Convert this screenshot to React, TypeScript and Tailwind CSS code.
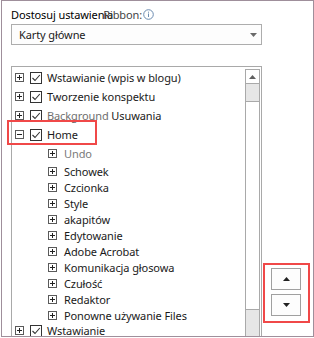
import React from "react";

type Row = {
  label: React.ReactNode;
  level: 0 | 1;
  h: number;
  open?: boolean;
  checked?: boolean;
  muted?: boolean;
  mark?: boolean;
};

const rows: Row[] = [
  { label: "Wstawianie (wpis w blogu)", level: 0, h: 19, checked: true },
  { label: "Tworzenie konspektu", level: 0, h: 19, checked: true },
  {
    label: (
      <>
        <span className="text-[#6f6f6f]">Background</span> Usuwania
      </>
    ),
    level: 0,
    h: 19,
    checked: true,
  },
  { label: "Home", level: 0, h: 19, checked: true, open: true, mark: true },
  { label: "Undo", level: 1, h: 19, muted: true },
  { label: "Schowek", level: 1, h: 16 },
  { label: "Czcionka", level: 1, h: 16 },
  { label: "Style", level: 1, h: 16 },
  { label: "akapitów", level: 1, h: 16 },
  { label: "Edytowanie", level: 1, h: 16 },
  { label: "Adobe Acrobat", level: 1, h: 16 },
  { label: "Komunikacja głosowa", level: 1, h: 16 },
  { label: "Czułość", level: 1, h: 16 },
  { label: "Redaktor", level: 1, h: 16 },
  { label: "Ponowne używanie Files", level: 1, h: 16 },
  { label: "Wstawianie", level: 0, h: 15, checked: true },
];

function Expander({ open }: { open?: boolean }) {
  return (
    <svg width="9" height="9" viewBox="0 0 9 9" className="shrink-0">
      <rect x="0.5" y="0.5" width="8" height="8" fill="#fff" stroke="#5a5a5a" />
      <line x1="2" y1="4.5" x2="7" y2="4.5" stroke="#222" />
      {!open && <line x1="4.5" y1="2" x2="4.5" y2="7" stroke="#222" />}
    </svg>
  );
}

function Check() {
  return (
    <svg width="12" height="12" viewBox="0 0 12 12" className="shrink-0">
      <rect x="0.5" y="0.5" width="11" height="11" fill="#fff" stroke="#333" />
      <path d="M2.5 6 L5 8.5 L9.8 3" fill="none" stroke="#333" strokeWidth="1.1" />
    </svg>
  );
}

function Triangle({ down, color = "#222" }: { down?: boolean; color?: string }) {
  return (
    <svg width="7" height="4" viewBox="0 0 7 4">
      <path d={down ? "M0 0 H7 L3.5 4 Z" : "M0 4 H7 L3.5 0 Z"} fill={color} />
    </svg>
  );
}

function TreeRow({ row }: { row: Row }) {
  return (
    <div
      className={`relative flex items-center ${row.level === 0 ? "pl-[3px]" : "pl-[36px]"}`}
      style={{ height: row.h }}
    >
      {row.mark && (
        <span className="absolute left-[-5px] top-[-5px] h-[25px] w-[90px] border-2 border-[#f04848]" />
      )}
      <Expander open={row.open} />
      {row.level === 0 ? (
        <>
          <span className="ml-[6px]">
            <Check />
          </span>
          <span className="ml-[5px] whitespace-nowrap">{row.label}</span>
        </>
      ) : (
        <span
          className={`ml-[7px] whitespace-nowrap ${row.muted ? "text-[#7a7a7a]" : ""}`}
        >
          {row.label}
        </span>
      )}
    </div>
  );
}

export default function App() {
  return (
    <div className="bg-white pl-[1px] font-['Noto_Sans',sans-serif] text-[11px] leading-[15px] tracking-[-0.1px] text-[#1a1a1a]">
      <div className="h-[337px] w-[313px] overflow-hidden border border-[#9f8f9b] pl-[9px] pt-[6px]">
        <div className="flex items-center whitespace-nowrap">
          <span className="text-black">Dostosuj ustawienia</span>
          <span className="ml-[-10px] text-[#444]">Ribbon:</span>
          <svg width="11" height="11" viewBox="0 0 11 11" className="ml-[1px]">
            <circle cx="5.5" cy="5.5" r="4.8" fill="none" stroke="#6b8bb0" />
            <rect x="5" y="4.5" width="1" height="3.5" fill="#6b8bb0" />
            <rect x="5" y="2.7" width="1" height="1" fill="#6b8bb0" />
          </svg>
        </div>
        <div className="mt-[2px] flex h-[21px] w-[251px] items-center justify-between border border-[#adadad] bg-[#fdfdfd] pl-[7px] pr-[4px]">
          <span>Karty główne</span>
          <Triangle down color="#6a6a6a" />
        </div>
        <div className="mt-[21px] flex">
          <div className="flex h-[300px] w-[251px] border border-[#a9a9a9] bg-white">
            <div className="flex-1 pt-[1px]">
              {rows.map((row, i) => (
                <TreeRow key={i} row={row} />
              ))}
            </div>
            <div className="mt-[2px] mr-[1px] flex w-[15px] flex-col border-x border-[#a9a9a9]">
              <div className="flex h-[15px] items-center justify-center border-y border-[#a9a9a9] bg-white">
                <Triangle color="#606060" />
              </div>
              <div className="h-[17px] bg-[#e6e6e6]" />
              <div className="h-[209px] border-y border-[#a9a9a9] bg-white" />
              <div className="flex-1 bg-[#e6e6e6]" />
            </div>
          </div>
          <div className="relative w-[51px]">
            <span className="absolute left-[1px] top-[197px] h-[60px] w-[47px] border-2 border-[#f04848]" />
            <div className="ml-[9px] mt-[202px] flex flex-col gap-[4px]">
              <button className="flex h-[22px] w-[30px] items-center justify-center border border-[#a0a0a0] bg-[#fdfdfd]">
                <Triangle />
              </button>
              <button className="flex h-[22px] w-[30px] items-center justify-center border border-[#a0a0a0] bg-[#fdfdfd]">
                <Triangle down />
              </button>
            </div>
          </div>
        </div>
      </div>
    </div>
  );
}
